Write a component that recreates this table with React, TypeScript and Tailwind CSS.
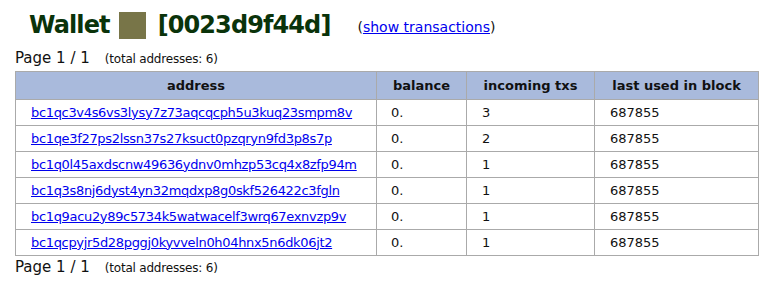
const rows = [
  { addr: "bc1qc3v4s6vs3lysy7z73aqcqcph5u3kuq23smpm8v", txs: "3" },
  { addr: "bc1qe3f27ps2lssn37s27ksuct0pzqryn9fd3p8s7p", txs: "2" },
  { addr: "bc1q0l45axdscnw49636ydnv0mhzp53cq4x8zfp94m", txs: "1" },
  { addr: "bc1q3s8nj6dyst4yn32mqdxp8g0skf526422c3fgln", txs: "1" },
  { addr: "bc1q9acu2y89c5734k5watwacelf3wrq67exnvzp9v", txs: "1" },
  { addr: "bc1qcpyjr5d28pggj0kyvveln0h04hnx5n6dk06jt2", txs: "1" },
];

function Pager() {
  return (
    <div className="flex items-baseline h-[16px] leading-[16px] text-[#111]">
      <span className="text-[15px]">Page 1 / 1</span>
      <span className="ml-[15px] text-[12px] tracking-[-0.2px]">(total addresses: 6)</span>
    </div>
  );
}

export default function App() {
  return (
    <div className="w-[782px] h-[288px] bg-white overflow-hidden pl-[15px] font-['DejaVu_Sans',sans-serif]">
      {/* Title */}
      <div className="flex items-center h-[50px] pl-[14px]">
        <h1 className="flex items-center text-[24px] font-bold text-[#0a330a] leading-none tracking-[-0.9px]">
          <span>Wallet</span>
          <span className="inline-block w-[27px] h-[27px] bg-[#787548] ml-[9px] mr-[12px]" />
          <span>[0023d9f44d]</span>
        </h1>
        <span className="ml-[27px] mt-[4px] text-[14px] text-[#111]">
          (<a href="#" className="text-[#0000ee] underline">show transactions</a>)
        </span>
      </div>

      <Pager />

      <table className="mt-[5px] border-collapse table-fixed w-[744px] text-[13px] text-[#111]">
        <colgroup>
          <col className="w-[361px]" />
          <col className="w-[90px]" />
          <col className="w-[128px]" />
          <col className="w-[164px]" />
        </colgroup>
        <thead>
          <tr className="h-[28px] bg-[#a9badc]">
            <th className="border border-[#aaaaaa] font-bold">address</th>
            <th className="border border-[#aaaaaa] font-bold">balance</th>
            <th className="border border-[#aaaaaa] font-bold">incoming txs</th>
            <th className="border border-[#aaaaaa] font-bold">last used in block</th>
          </tr>
        </thead>
        <tbody>
          {rows.map((r) => (
            <tr key={r.addr} className="h-[26px]">
              <td className="border border-[#aaaaaa] pl-[15px]">
                <a href="#" className="text-[#0000ee] underline tracking-[-0.33px]">{r.addr}</a>
              </td>
              <td className="border border-[#aaaaaa] pl-[14px]">0.</td>
              <td className="border border-[#aaaaaa] pl-[15px]">{r.txs}</td>
              <td className="border border-[#aaaaaa] pl-[15px]">687855</td>
            </tr>
          ))}
        </tbody>
      </table>

      <div className="mt-[3px]">
        <Pager />
      </div>
    </div>
  );
}
